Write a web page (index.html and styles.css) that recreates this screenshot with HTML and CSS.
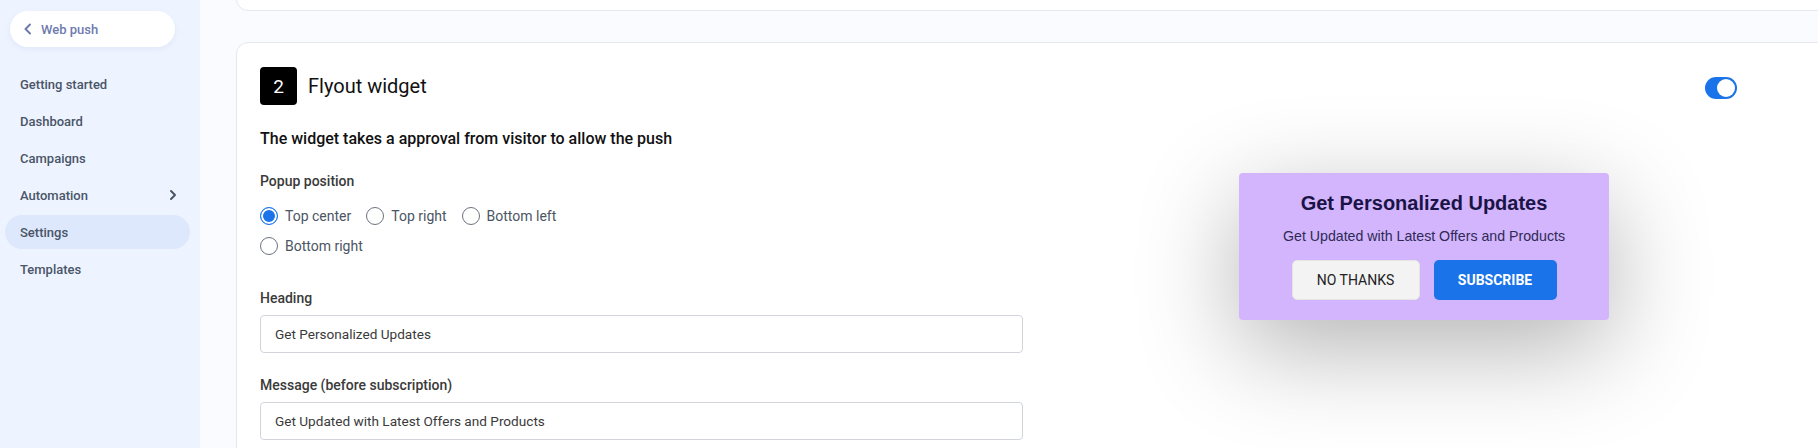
FILE: index.html
```html
<!DOCTYPE html>
<html lang="en">
<head>
<meta charset="utf-8">
<title>Web push settings</title>
<link rel="stylesheet" href="styles.css">
</head>
<body>
<aside class="sidebar">
  <a class="back-pill" href="#">
    <svg class="back-icon" width="10" height="12" viewBox="0 0 10 12"><path d="M7 1.5 L2.5 6 L7 10.5" fill="none" stroke="#6e7bb0" stroke-width="2" stroke-linecap="round" stroke-linejoin="round"/></svg>
    <span>Web push</span>
  </a>
  <nav class="nav">
    <a class="nav-item" href="#">Getting started</a>
    <a class="nav-item" href="#">Dashboard</a>
    <a class="nav-item" href="#">Campaigns</a>
    <a class="nav-item has-sub" href="#">Automation
      <svg width="8" height="12" viewBox="0 0 8 12"><path d="M2 2 L6 6 L2 10" fill="none" stroke="#4a5568" stroke-width="2" stroke-linecap="round" stroke-linejoin="round"/></svg>
    </a>
    <a class="nav-item active" href="#">Settings</a>
    <a class="nav-item" href="#">Templates</a>
  </nav>
</aside>
<main class="main">
  <section class="card card-prev"></section>
  <section class="card card-flyout">
    <header class="card-head">
      <div class="head-left">
        <span class="step">2</span>
        <h2 class="card-title">Flyout widget</h2>
      </div>
      <span class="toggle"><span class="knob"></span></span>
    </header>
    <div class="card-body">
      <div class="form">
        <p class="desc">The widget takes a approval from visitor to allow the push</p>
        <div class="field">
          <div class="label">Popup position</div>
          <div class="radios">
            <label class="radio"><span class="dot checked"></span>Top center</label>
            <label class="radio"><span class="dot"></span>Top right</label>
            <label class="radio"><span class="dot"></span>Bottom left</label>
            <label class="radio"><span class="dot"></span>Bottom right</label>
          </div>
        </div>
        <div class="field field-heading">
          <div class="label">Heading</div>
          <div class="input">Get Personalized Updates</div>
        </div>
        <div class="field field-msg">
          <div class="label">Message (before subscription)</div>
          <div class="input">Get Updated with Latest Offers and Products</div>
        </div>
      </div>
      <div class="preview">
        <div class="popup">
          <div class="popup-title">Get Personalized Updates</div>
          <div class="popup-msg">Get Updated with Latest Offers and Products</div>
          <div class="popup-actions">
            <button class="btn btn-no">NO THANKS</button>
            <button class="btn btn-yes">SUBSCRIBE</button>
          </div>
        </div>
      </div>
    </div>
  </section>
</main>
</body>
</html>
```
FILE: styles.css
```css
* { box-sizing: border-box; }
html, body { height: 100%; }
body {
  margin: 0;
  display: flex;
  overflow: hidden;
  font-family: Roboto, "Liberation Sans", Arial, sans-serif;
  background: #f9fbff;
  color: #222;
}
a { text-decoration: none; }

.sidebar {
  width: 200px;
  flex: none;
  height: 448px;
  background: #eef4ff;
  padding: 11px 10px 0 5px;
}
.back-pill {
  display: flex;
  align-items: center;
  height: 36px;
  width: 165px;
  margin-left: 5px;
  padding-left: 13px;
  border-radius: 18px;
  background: #fff;
  box-shadow: 0 2px 6px rgba(120, 140, 200, 0.12);
  color: #6e7bb0;
  font-size: 13px;
  font-weight: 500;
}
.back-icon { margin-right: 8px; }
.nav {
  margin-top: 20px;
  display: flex;
  flex-direction: column;
  gap: 3px;
}
.nav-item {
  display: flex;
  align-items: center;
  justify-content: space-between;
  height: 34px;
  width: 185px;
  padding: 0 13px 0 15px;
  border-radius: 17px;
  color: #4a5568;
  font-size: 13px;
  font-weight: 500;
}
.nav-item.active { background: #dde8fc; }

.main {
  flex: 1;
  padding-left: 36px;
  min-width: 0;
}
.card {
  background: #fff;
  border: 1px solid #e6e8ee;
  border-radius: 12px;
  margin-right: -20px;
}
.card-prev {
  height: 40px;
  margin-top: -29px;
}
.card-flyout {
  margin-top: 31px;
  padding: 24px 100px 0 23px;
  height: 460px;
}
.card-head {
  display: flex;
  align-items: center;
  justify-content: space-between;
}
.head-left { display: flex; align-items: center; }
.step {
  width: 37px;
  height: 38px;
  border-radius: 4px;
  background: #000;
  color: #fff;
  font-size: 19px;
  display: flex;
  align-items: center;
  justify-content: center;
}
.card-title {
  margin: 0 0 0 11px;
  font-size: 20px;
  font-weight: 400;
  color: #111;
}
.toggle {
  width: 32px;
  height: 22px;
  border-radius: 11px;
  background: #1a73e8;
  display: flex;
  align-items: center;
  justify-content: flex-end;
  padding-right: 2px;
  margin-top: 4px;
}
.knob {
  width: 18px;
  height: 18px;
  border-radius: 50%;
  background: #fff;
}

.card-body {
  display: grid;
  grid-template-columns: 763px 1fr;
}
.desc {
  margin: 24px 0 0;
  font-size: 16px;
  line-height: 20px;
  font-weight: 500;
  color: #111;
}
.field { margin-top: 22px; }
.label {
  font-size: 14px;
  line-height: 20px;
  font-weight: 500;
  color: #3a3a3a;
}
.radios {
  margin-top: 14px;
  display: flex;
  flex-wrap: wrap;
  max-width: 360px;
  column-gap: 15px;
  row-gap: 8px;
}
.radio {
  display: flex;
  align-items: center;
  height: 22px;
  font-size: 14px;
  color: #4b5563;
}
.dot {
  width: 18px;
  height: 18px;
  border-radius: 50%;
  border: 1.5px solid #6b7280;
  margin-right: 7px;
  flex: none;
  background: #fff;
}
.dot.checked {
  border: 1.5px solid #1a73e8;
  box-shadow: inset 0 0 0 2px #fff;
  background: #1a73e8;
}
.field-heading { margin-top: 31px; }
.field-heading .input, .field-msg .input { margin-top: 7px; }
.input {
  height: 38px;
  border: 1px solid #d1d5db;
  border-radius: 4px;
  padding-left: 14px;
  display: flex;
  align-items: center;
  font-size: 13.6px;
  color: #3a3a3a;
}

.preview { padding: 68px 0 0 216px; }
.popup {
  width: 370px;
  height: 147px;
  background: #d3b5fd;
  border-radius: 4px;
  box-shadow: 0 28px 100px rgba(0, 0, 0, 0.3);
  padding-top: 18px;
  text-align: center;
}
.popup-title {
  font-family: "Liberation Sans", Arial, sans-serif;
  font-size: 20px;
  line-height: 24px;
  font-weight: 700;
  color: #1a1446;
}
.popup-msg {
  margin-top: 12px;
  font-family: "Liberation Sans", Arial, sans-serif;
  font-size: 14.2px;
  line-height: 18px;
  color: #2e2a55;
}
.popup-actions {
  margin-top: 15px;
  display: flex;
  justify-content: center;
  gap: 14px;
}
.btn {
  height: 40px;
  border-radius: 5px;
  font-family: Roboto, sans-serif;
  font-size: 14px;
  cursor: pointer;
}
.btn-no {
  width: 128px;
  background: #f3f3f3;
  border: 1px solid #e4e4e4;
  color: #222;
  font-weight: 400;
}
.btn-yes {
  width: 123px;
  background: #1a73e8;
  border: none;
  color: #fff;
  font-weight: 700;
}
```
